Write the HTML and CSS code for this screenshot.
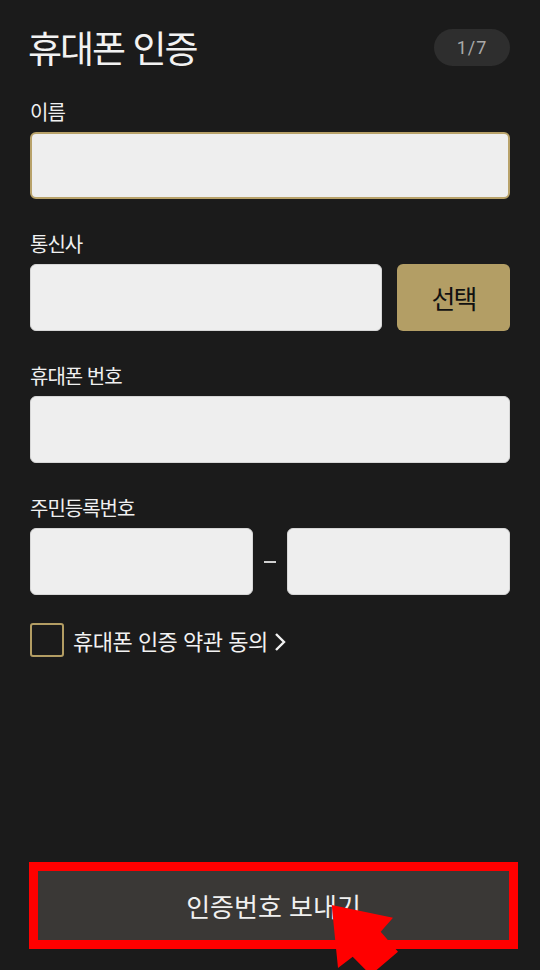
FILE: index.html
```html
<!DOCTYPE html>
<html lang="ko">
<head>
<meta charset="UTF-8">
<meta name="viewport" content="width=device-width, initial-scale=1.0">
<title>휴대폰 인증</title>
<link rel="stylesheet" href="styles.css">
</head>
<body>
<div class="app">
<header class="top">
<h1 class="title">휴대폰 인증</h1>
<span class="step">1/7</span>
</header>
<form class="form" onsubmit="return false">
<div class="field">
<label class="label">이름</label>
<input class="input input-focus" type="text">
</div>
<div class="field">
<label class="label">통신사</label>
<div class="row">
<input class="input" type="text" readonly>
<button type="button" class="pick">선택</button>
</div>
</div>
<div class="field">
<label class="label">휴대폰 번호</label>
<input class="input" type="tel">
</div>
<div class="field">
<label class="label">주민등록번호</label>
<div class="row">
<input class="input" type="text">
<span class="dash"><i></i></span>
<input class="input" type="password">
</div>
</div>
<label class="agree">
<span class="box"></span>
<span class="agree-text">휴대폰 인증 약관 동의</span>
<svg class="chev" width="12" height="20" viewBox="0 0 12 20"><path d="M2 2 L10 10 L2 18" fill="none" stroke="#f2f2f2" stroke-width="2.4"/></svg>
</label>
</form>
<div class="cta-frame">
<button type="button" class="cta">인증번호 보내기</button>
</div>
<svg class="pointer" width="90" height="85" viewBox="0 0 90 85"><polygon points="11.7,10 73,22.7 60.7,36.7 78,56.7 50.7,80 32.7,61.7 18,73" fill="#ff0000"/></svg>
</div>
</body>
</html>
```

FILE: styles.css
```css
* {box-sizing: border-box;margin: 0;padding: 0;}
body {background: #fff;font-family: "Noto Sans CJK KR", "Noto Sans", sans-serif;color: #f2f2f2;}
.app {position: relative;width: 540px;height: 970px;background: #1b1b1b;padding: 0 30px 21px;display: flex;flex-direction: column;}
.top {display: flex;align-items: center;justify-content: space-between;height: 62px;margin-top: 16px;flex: none;}
.title {font-size: 37px;font-weight: 400;letter-spacing: -2px;margin-left: -2px;line-height: 1;}
.step {width: 76px;height: 37px;border-radius: 19px;background: #2e2e2e;color: #a9a9a9;font-family: Roboto, sans-serif;font-size: 18px;display: flex;align-items: center;justify-content: center;letter-spacing: 1px;}
.form {margin-top: 19px;display: flex;flex-direction: column;gap: 30px;}
.field {display: flex;flex-direction: column;}
.label {font-size: 20px;letter-spacing: -1px;line-height: 30px;margin-bottom: 5px;color: #f0f0f0;}
.row {display: flex;gap: 15px;}
.input {flex: none;width: 100%;height: 67px;background: #eeeeee;border: 1px solid #d6d6d6;border-radius: 6px;outline: none;font-size: 20px;padding: 0 14px;}
.row .input {flex: 1;width: auto;min-width: 0;}
.input-focus {border: 2px solid #b8a26a;}
.pick {width: 113px;height: 67px;flex: none;border: none;border-radius: 6px;background: #b39e65;color: #111;font-family: inherit;font-size: 26px;letter-spacing: -2px;}
.row .dash {width: 4px;display: flex;align-items: center;justify-content: center;}
.dash i {display: block;width: 12px;height: 2px;background: #d0d0d0;flex: none;}
.agree {display: flex;align-items: center;margin-top: -2px;height: 34px;}
.box {width: 34px;height: 34px;border: 2px solid #b39d63;border-radius: 3px;flex: none;}
.agree-text {font-size: 22px;letter-spacing: -0.5px;margin-left: 9px;line-height: 34px;}
.chev {margin-left: 6px;margin-top: 4px;}
.cta-frame {margin-top: auto;margin-left: -1px;margin-right: -8px;border: 9px solid #ff0000;}
.cta {display: block;width: 100%;height: 69px;border: none;background: #3a3836;color: #f0f0f0;font-family: inherit;font-size: 26px;letter-spacing: 0;}
.pointer {position: absolute;left: 320px;top: 895px;}
```
